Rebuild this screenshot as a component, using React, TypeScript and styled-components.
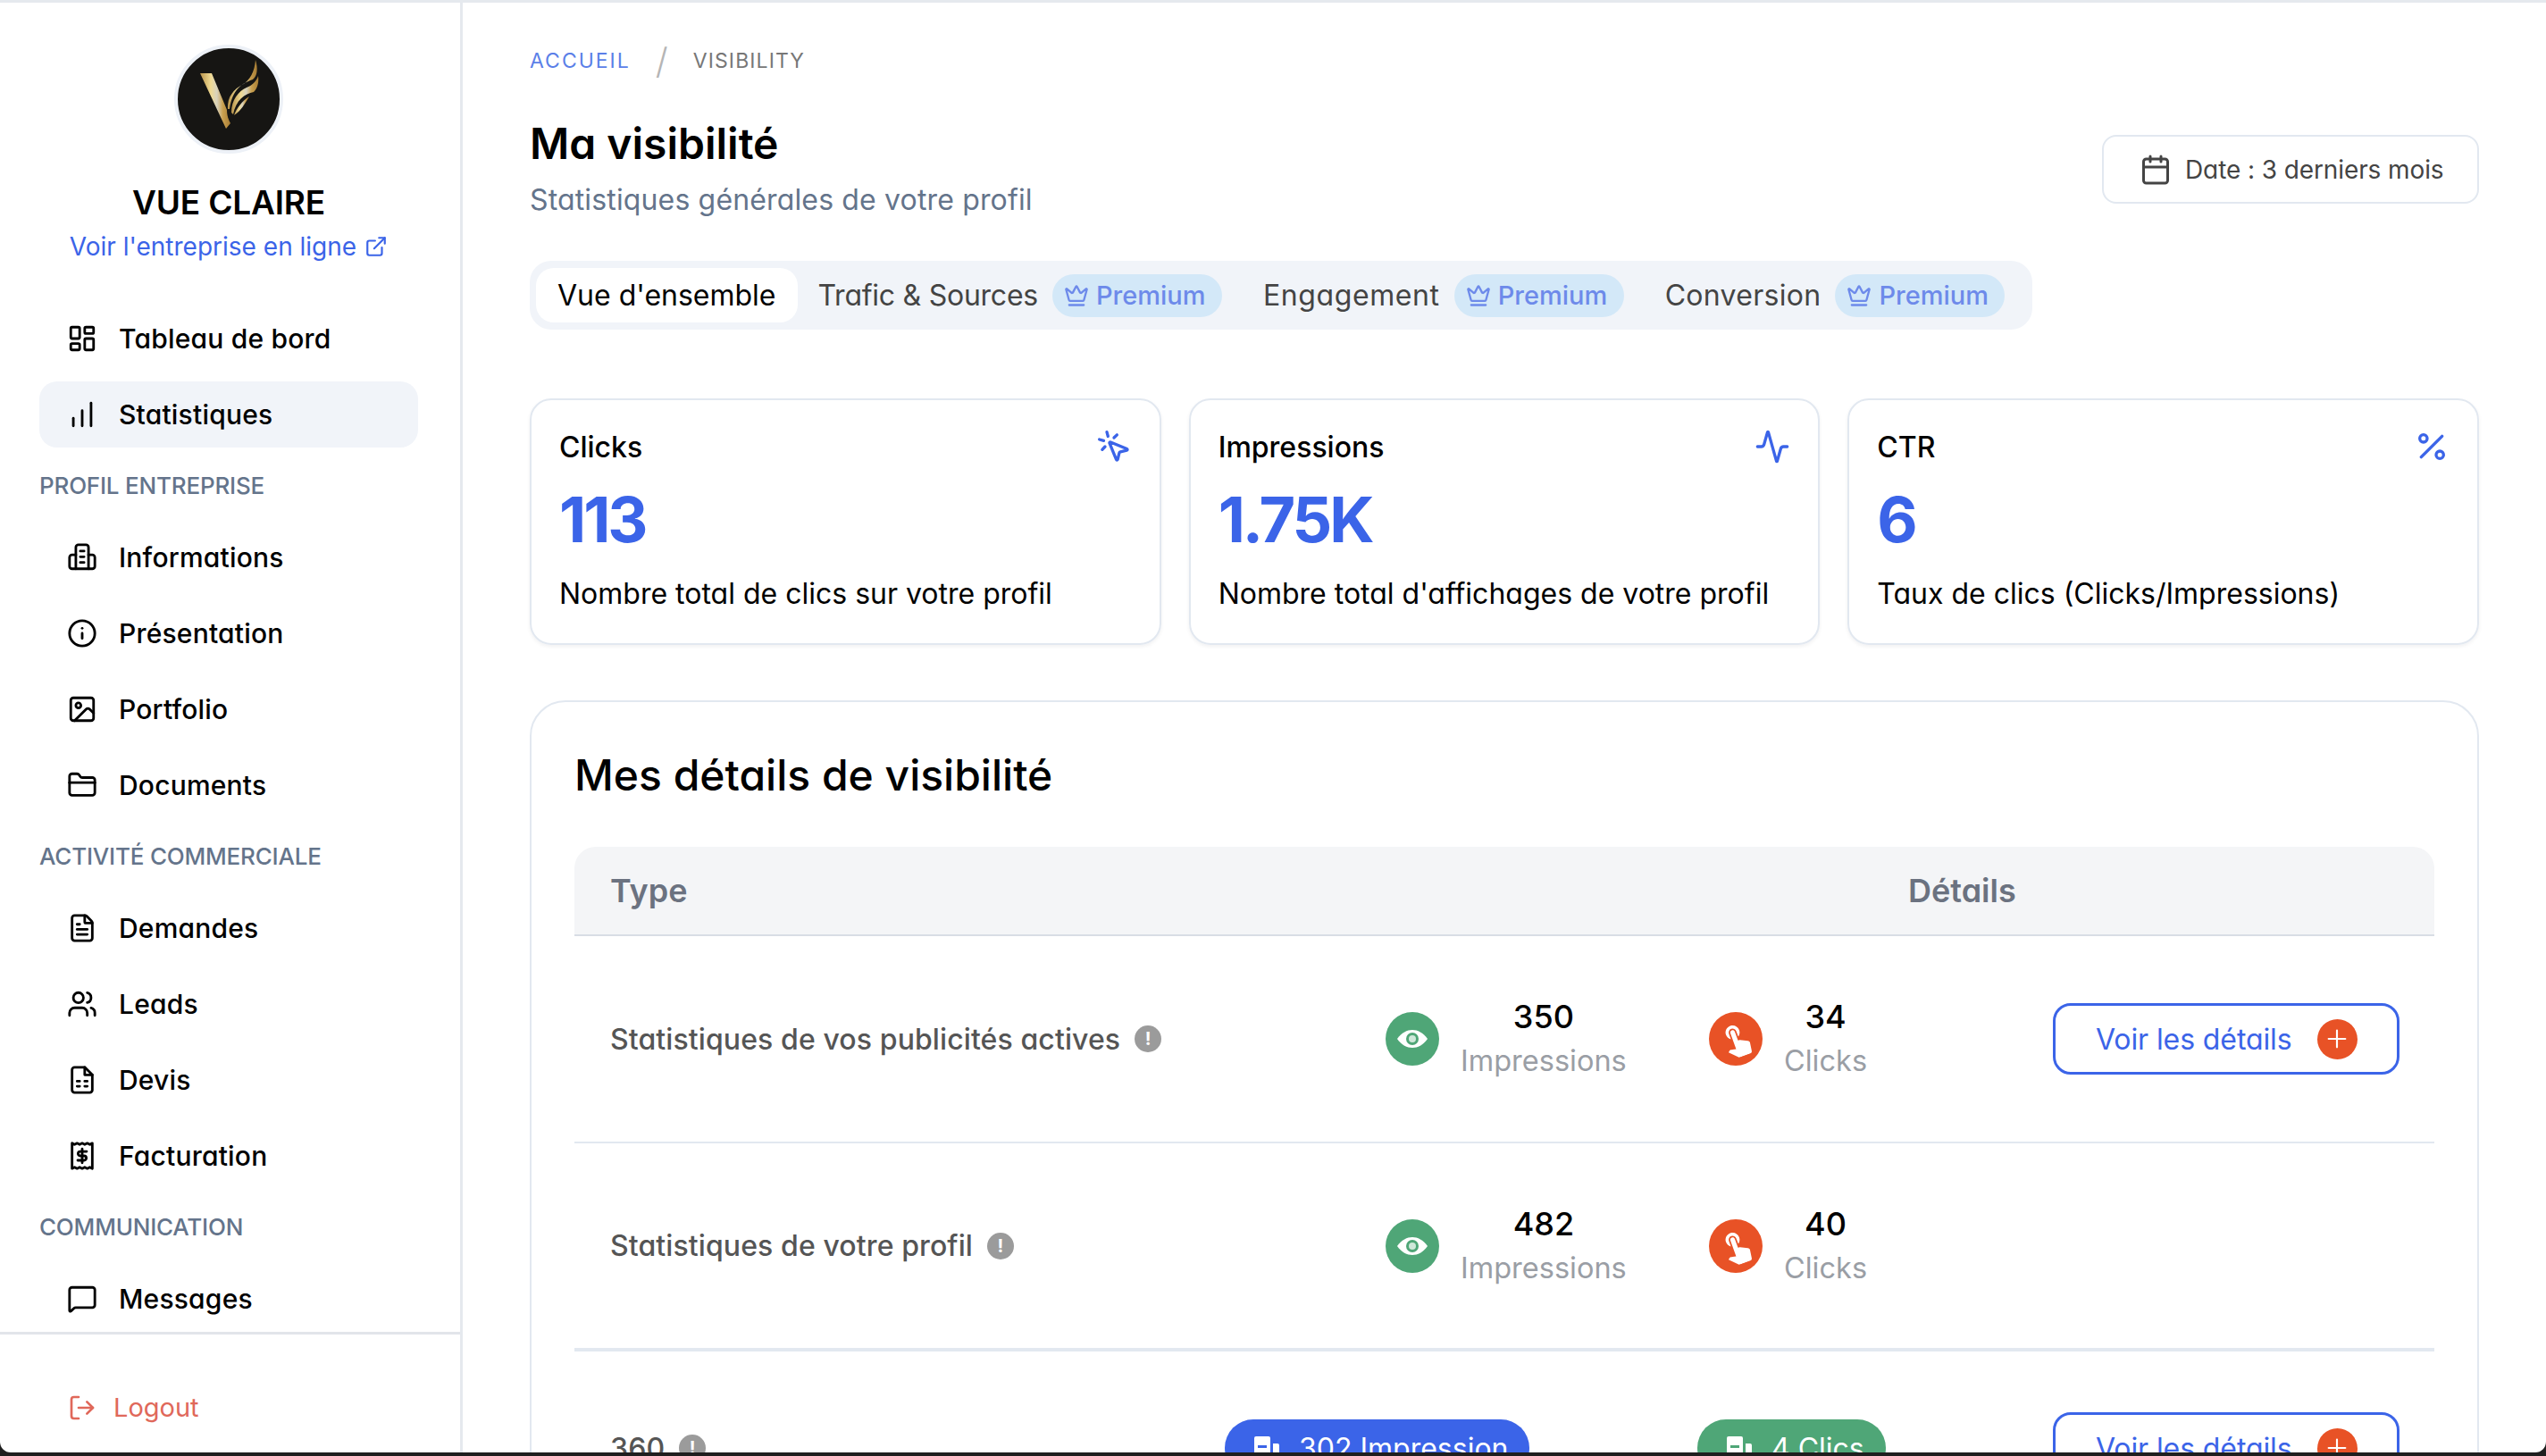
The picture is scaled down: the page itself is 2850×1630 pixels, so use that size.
import React from "react";
import styled, { createGlobalStyle } from "styled-components";
import {
  LayoutDashboard,
  ChartNoAxesColumnIncreasing,
  Info,
  Image,
  FolderClosed,
  FileText,
  Users,
  MessageSquare,
  LogOut,
  ExternalLink,
  Calendar,
  Crown,
  MousePointerClick,
  Activity,
  Percent,
  Plus,
} from "lucide-react";
import { MdTouchApp } from "react-icons/md";

const GlobalStyle = createGlobalStyle`
  html, body {
    margin: 0;
    padding: 0;
    background: #1f1f1f;
    overflow: hidden;
  }
  body {
    font-family: Inter, "Noto Sans", sans-serif;
    font-feature-settings: "cv11";
    color: #000;
  }
`;

const Shell = styled.div`
  display: flex;
  width: 2850px;
  height: 1626px;
  overflow: hidden;
  background: #fff;
  border-top: 3px solid #e5e9ee;
  border-radius: 0 0 12px 12px;
  box-sizing: border-box;
`;

const Sidebar = styled.aside`
  flex: 0 0 518px;
  box-sizing: border-box;
  border-right: 3px solid #e5e9ee;
  display: flex;
  flex-direction: column;
`;

const Brand = styled.div`
  display: flex;
  flex-direction: column;
  align-items: center;
  padding: 47px 3px 0 0;
  height: 342px;
  box-sizing: border-box;
`;

const Avatar = styled.svg`
  width: 122px;
  height: 122px;
  display: block;
`;

const BrandName = styled.div`
  margin-top: 31px;
  font-size: 37px;
  line-height: 48px;
  font-weight: 600;
  letter-spacing: -0.2px;
`;

const BrandLink = styled.a`
  margin-top: 5px;
  display: flex;
  align-items: center;
  gap: 9px;
  font-size: 28px;
  line-height: 40px;
  color: #3b64e8;
`;

const Nav = styled.nav`
  display: flex;
  flex-direction: column;
  gap: 11px;
  padding: 0 47px 0 44px;
  flex: 1;
`;

const NavRow = styled.div<{ $active?: boolean }>`
  display: flex;
  align-items: center;
  gap: 24px;
  height: 74px;
  padding-left: 31px;
  border-radius: 20px;
  font-size: 30px;
  font-weight: 500;
  letter-spacing: 0.2px;
  background: ${(p) => (p.$active ? "#f1f4f9" : "transparent")};

  svg {
    flex: none;
  }
`;

const NavLabel = styled.div`
  height: 64px;
  display: flex;
  align-items: center;
  font-size: 26px;
  font-weight: 500;
  letter-spacing: -0.2px;
  color: #64748b;
`;

const SideFooter = styled.div`
  border-top: 3px solid #e2e5ea;
  height: 136px;
  box-sizing: border-box;
  padding: 60px 0 0 76px;
`;

const Logout = styled.div`
  display: flex;
  align-items: center;
  gap: 19px;
  height: 44px;
  font-size: 29px;
  color: #e0685a;
`;

const Main = styled.main`
  flex: 1;
  min-width: 0;
  padding: 0 75px;
`;

const Breadcrumb = styled.div`
  display: flex;
  align-items: center;
  height: 40px;
  margin-top: 45px;
  font-size: 23px;
`;

const Crumb = styled.span<{ $link?: boolean }>`
  color: ${(p) => (p.$link ? "#5b7fe8" : "#777")};
  letter-spacing: ${(p) => (p.$link ? "2px" : "1.1px")};
`;

const Slash = styled.span`
  margin: 0 28px;
  font-size: 40px;
  font-weight: 300;
  color: #b5b5b5;
`;

const HeaderRow = styled.div`
  display: flex;
  justify-content: space-between;
  align-items: flex-start;
  margin-top: 20px;
`;

const Title = styled.h1`
  margin: 23px 0 0;
  font-size: 48px;
  line-height: 60px;
  font-weight: 600;
`;

const Subtitle = styled.p`
  margin: 11px 0 0;
  font-size: 32px;
  line-height: 44px;
  letter-spacing: 0.15px;
  color: #64748b;
`;

const DateButton = styled.div`
  display: flex;
  align-items: center;
  gap: 15px;
  margin-top: 43px;
  width: 422px;
  height: 77px;
  padding-left: 40px;
  box-sizing: border-box;
  border: 2px solid #e2e8f0;
  border-radius: 16px;
  font-size: 28px;
  letter-spacing: -0.1px;
  color: #444;
`;

const Tabs = styled.div`
  display: inline-flex;
  align-items: center;
  height: 77px;
  margin-top: 46px;
  padding: 0 31px 0 7px;
  background: #f1f4f9;
  border-radius: 24px;
`;

const ActiveTab = styled.div`
  display: flex;
  align-items: center;
  height: 61px;
  padding: 0 24px;
  margin-right: 23px;
  border-radius: 20px;
  font-size: 32px;
  background: #fff;
`;

const Tab = styled.div<{ $spacing: number }>`
  display: flex;
  align-items: center;
  gap: 16px;
  margin-right: 46px;
  font-size: 32px;
  letter-spacing: ${(p) => p.$spacing}px;
  color: #444;

  &:last-child {
    margin-right: 0;
  }
`;

const PremiumPill = styled.span`
  display: inline-flex;
  align-items: center;
  gap: 8px;
  width: 190px;
  height: 48px;
  padding-left: 13px;
  box-sizing: border-box;
  border-radius: 24px;
  background: #d3e8f8;
  font-size: 29px;
  font-weight: 500;
  letter-spacing: 0;
  color: #6d8aea;
`;

const Cards = styled.div`
  display: grid;
  grid-template-columns: repeat(3, 1fr);
  gap: 31px;
  margin-top: 77px;
`;

const Card = styled.div`
  height: 276px;
  box-sizing: border-box;
  padding: 32px 31px;
  border: 2px solid #e2e8f0;
  border-radius: 24px;
  box-shadow: 0 2px 4px rgba(15, 23, 42, 0.06);
`;

const CardTop = styled.div`
  display: flex;
  justify-content: space-between;
  align-items: center;
  height: 40px;
  font-size: 32px;
  font-weight: 500;
  color: #3b64e8;
`;

const CardTitle = styled.span`
  color: #000;
`;

const CardValue = styled.div`
  margin-top: 18px;
  font-size: 70px;
  line-height: 88px;
  font-weight: 700;
  letter-spacing: -3px;
  color: #3b64e8;
`;

const CardText = styled.div`
  margin-top: 17px;
  font-size: 32px;
  line-height: 44px;
`;

const Panel = styled.section`
  margin-top: 62px;
  height: 900px;
  box-sizing: border-box;
  padding: 0 48px;
  border: 2px solid #e2e8f0;
  border-radius: 40px;
`;

const PanelTitle = styled.h2`
  margin: 0;
  padding-top: 51px;
  height: 162px;
  box-sizing: border-box;
  font-size: 48px;
  line-height: 62px;
  font-weight: 500;
`;

const TableHead = styled.div`
  display: grid;
  grid-template-columns: 1453px 1fr;
  align-items: center;
  height: 98px;
  padding: 0 40px;
  background: #f4f5f7;
  border-bottom: 2px solid #d8dde5;
  border-radius: 24px 24px 0 0;
  font-size: 36px;
  font-weight: 600;
  color: #6b7280;
`;

const Row = styled.div<{ $pills?: boolean; $height: number; $thick?: boolean }>`
  display: grid;
  grid-template-columns: ${(p) =>
    p.$pills ? "688px 529px 398px 388px" : "868px 362px 385px 388px"};
  align-items: center;
  height: ${(p) => p.$height}px;
  box-sizing: border-box;
  padding: 0 40px;
  border-bottom: ${(p) => (p.$thick ? "4px" : "2px")} solid #e2e8f0;

  &:last-child {
    border-bottom: 0;
  }
`;

const RowTitle = styled.div`
  display: flex;
  align-items: center;
  gap: 16px;
  font-size: 32px;
  font-weight: 500;
  letter-spacing: 0.1px;
  color: #555;
`;

const Hint = styled.span`
  display: inline-flex;
  align-items: center;
  justify-content: center;
  width: 30px;
  height: 30px;
  border-radius: 50%;
  background: #9b9b9b;
  color: #fff;
  font-size: 20px;
  font-weight: 700;
`;

const Stat = styled.div`
  display: flex;
  align-items: center;
  gap: 24px;
`;

const StatIcon = styled.span<{ $bg: string }>`
  display: inline-flex;
  align-items: center;
  justify-content: center;
  width: 60px;
  height: 60px;
  border-radius: 50%;
  background: ${(p) => p.$bg};
  color: #fff;
`;

const TouchIcon = styled(MdTouchApp)`
  transform: rotate(-20deg);
`;

const StatText = styled.div`
  display: flex;
  flex-direction: column;
  align-items: center;
  gap: 6px;
`;

const StatValue = styled.span`
  font-size: 36px;
  line-height: 44px;
  font-weight: 500;
`;

const StatName = styled.span`
  font-size: 32.5px;
  line-height: 44px;
  color: #9a9ea5;
`;

const DetailsButton = styled.div`
  display: flex;
  align-items: center;
  gap: 28px;
  height: 80px;
  padding-left: 45px;
  box-sizing: border-box;
  border: 3px solid #3b64e8;
  border-radius: 20px;
  font-size: 32px;
  letter-spacing: -0.1px;
  color: #3b64e8;
`;

const PlusDot = styled.span`
  display: inline-flex;
  align-items: center;
  justify-content: center;
  width: 45px;
  height: 45px;
  border-radius: 50%;
  background: #e85226;
  color: #fff;
`;

const CountPill = styled.div<{ $bg: string; $width: number }>`
  display: flex;
  align-items: center;
  gap: 21px;
  width: ${(p) => p.$width}px;
  height: 64px;
  padding-left: 32px;
  box-sizing: border-box;
  border-radius: 32px;
  background: ${(p) => p.$bg};
  color: #fff;
  font-size: 32px;
`;

function NewsIcon() {
  return (
    <svg width="34" height="34" viewBox="0 0 24 24" fill="none" stroke="currentColor" strokeWidth="2" strokeLinecap="round" strokeLinejoin="round">
      <path d="M7 21V4a2 2 0 0 1 2-2h6a2 2 0 0 1 2 2v17" />
      <path d="M7 10H4a2 2 0 0 0-2 2v7a2 2 0 0 0 2 2h16a2 2 0 0 0 2-2v-7a2 2 0 0 0-2-2h-3" />
      <path d="M10.5 7h3M10.5 11.5h3M10.5 16h3" />
    </svg>
  );
}

function QuoteIcon() {
  return (
    <svg width="34" height="34" viewBox="0 0 24 24" fill="none" stroke="currentColor" strokeWidth="2" strokeLinecap="round" strokeLinejoin="round">
      <path d="M6 22a2 2 0 0 1-2-2V4a2 2 0 0 1 2-2h8l6 6v12a2 2 0 0 1-2 2z" />
      <path d="M14 2v6h6" />
      <path d="M8 13h2M14 13h2M8 17h2M14 17h2" />
    </svg>
  );
}

function ReceiptIcon() {
  return (
    <svg width="34" height="34" viewBox="0 0 24 24" fill="none" stroke="currentColor" strokeWidth="2" strokeLinecap="round" strokeLinejoin="round">
      <path d="M4 2v20l2-1 2 1 2-1 2 1 2-1 2 1 2-1 2 1V2l-2 1-2-1-2 1-2-1-2 1-2-1-2 1z" />
      <path d="M15.5 8.5h-5a1.75 1.75 0 0 0 0 3.5h3a1.75 1.75 0 0 1 0 3.5h-5M12 6.5v11" />
    </svg>
  );
}

function SolidEye() {
  return (
    <svg width="36" height="36" viewBox="0 0 36 36">
      <path fill="#fff" d="M1 18C6 11 12 8 18 8s12 3 17 10c-5 7-11 10-17 10S6 25 1 18z" />
      <circle cx="18" cy="18" r="7" fill="#4fa677" />
      <circle cx="18" cy="18" r="4" fill="#cfe8da" />
    </svg>
  );
}

function SolidDoc({ accent }: { accent: string }) {
  return (
    <svg width="30" height="30" viewBox="0 0 30 30">
      <path fill="#fff" d="M3 2h14a2 2 0 0 1 2 2v24H1V4a2 2 0 0 1 2-2z" />
      <path fill="#fff" d="M22 10h5a2 2 0 0 1 2 2v16h-7z" />
      <rect x="5" y="12" width="10" height="3" fill={accent} />
    </svg>
  );
}

function Logo() {
  return (
    <Avatar viewBox="0 0 122 122">
      <defs>
        <linearGradient id="gold" x1="0" y1="0" x2="1" y2="0">
          <stop offset="0" stopColor="#b8934a" />
          <stop offset="0.35" stopColor="#efd992" />
          <stop offset="0.55" stopColor="#d8d2bd" />
          <stop offset="0.75" stopColor="#c9a050" />
          <stop offset="1" stopColor="#a77c33" />
        </linearGradient>
      </defs>
      <circle cx="61" cy="61" r="59" fill="#161513" stroke="#edf1f7" strokeWidth="4" />
      <path fill="url(#gold)" d="M29 32H42L59 73C59 80 61 84 63 88L58 94Z" />
      <path fill="url(#gold)" d="M60 72C59 58 67 50 76 45C85 40 90 30 91 17C94 27 93 35 88 39C76 43 65 50 62 72Z" />
      <path fill="url(#gold)" d="M64 76C64 62 72 52 81 48C87 46 92 41 94 35C95 43 93 49 89 53C79 55 69 62 66 78Z" />
      <path fill="url(#gold)" d="M67 79C70 71 76 63 84 58C79 66 75 74 67 79Z" />
    </Avatar>
  );
}

const iconProps = { size: 34, strokeWidth: 2 };

function PremiumTag() {
  return (
    <PremiumPill>
      <Crown size={28} strokeWidth={2} />
      Premium
    </PremiumPill>
  );
}

function Details() {
  return (
    <DetailsButton>
      Voir les détails
      <PlusDot>
        <Plus size={32} strokeWidth={1.6} />
      </PlusDot>
    </DetailsButton>
  );
}

function Stats({ views, clicks }: { views: string; clicks: string }) {
  return (
    <>
      <Stat>
        <StatIcon $bg="#4fa677">
          <SolidEye />
        </StatIcon>
        <StatText>
          <StatValue>{views}</StatValue>
          <StatName>Impressions</StatName>
        </StatText>
      </Stat>
      <Stat>
        <StatIcon $bg="#e85226">
          <TouchIcon size={42} />
        </StatIcon>
        <StatText>
          <StatValue>{clicks}</StatValue>
          <StatName>Clicks</StatName>
        </StatText>
      </Stat>
    </>
  );
}

export default function App() {
  return (
    <>
      <GlobalStyle />
      <Shell>
        <Sidebar>
          <Brand>
            <Logo />
            <BrandName>VUE CLAIRE</BrandName>
            <BrandLink>
              Voir l'entreprise en ligne
              <ExternalLink size={26} strokeWidth={2} />
            </BrandLink>
          </Brand>
          <Nav>
            <NavRow><LayoutDashboard {...iconProps} />Tableau de bord</NavRow>
            <NavRow $active><ChartNoAxesColumnIncreasing {...iconProps} />Statistiques</NavRow>
            <NavLabel>PROFIL ENTREPRISE</NavLabel>
            <NavRow><NewsIcon />Informations</NavRow>
            <NavRow><Info {...iconProps} />Présentation</NavRow>
            <NavRow><Image {...iconProps} />Portfolio</NavRow>
            <NavRow><FolderClosed {...iconProps} />Documents</NavRow>
            <NavLabel>ACTIVITÉ COMMERCIALE</NavLabel>
            <NavRow><FileText {...iconProps} />Demandes</NavRow>
            <NavRow><Users {...iconProps} />Leads</NavRow>
            <NavRow><QuoteIcon />Devis</NavRow>
            <NavRow><ReceiptIcon />Facturation</NavRow>
            <NavLabel>COMMUNICATION</NavLabel>
            <NavRow><MessageSquare {...iconProps} />Messages</NavRow>
          </Nav>
          <SideFooter>
            <Logout>
              <LogOut size={32} strokeWidth={2} />
              Logout
            </Logout>
          </SideFooter>
        </Sidebar>
        <Main>
          <Breadcrumb>
            <Crumb $link>ACCUEIL</Crumb>
            <Slash>/</Slash>
            <Crumb>VISIBILITY</Crumb>
          </Breadcrumb>
          <HeaderRow>
            <div>
              <Title>Ma visibilité</Title>
              <Subtitle>Statistiques générales de votre profil</Subtitle>
            </div>
            <DateButton>
              <Calendar size={36} strokeWidth={2} />
              Date : 3 derniers mois
            </DateButton>
          </HeaderRow>
          <Tabs>
            <ActiveTab>Vue d'ensemble</ActiveTab>
            <Tab $spacing={-0.25}>Trafic &amp; Sources<PremiumTag /></Tab>
            <Tab $spacing={0.6}>Engagement<PremiumTag /></Tab>
            <Tab $spacing={0.3}>Conversion<PremiumTag /></Tab>
          </Tabs>
          <Cards>
            <Card>
              <CardTop><CardTitle>Clicks</CardTitle><MousePointerClick size={40} strokeWidth={2} /></CardTop>
              <CardValue>113</CardValue>
              <CardText>Nombre total de clics sur votre profil</CardText>
            </Card>
            <Card>
              <CardTop><CardTitle>Impressions</CardTitle><Activity size={40} strokeWidth={2} /></CardTop>
              <CardValue>1.75K</CardValue>
              <CardText>Nombre total d'affichages de votre profil</CardText>
            </Card>
            <Card>
              <CardTop><CardTitle>CTR</CardTitle><Percent size={40} strokeWidth={2} /></CardTop>
              <CardValue>6</CardValue>
              <CardText>Taux de clics (Clicks/Impressions)</CardText>
            </Card>
          </Cards>
          <Panel>
            <PanelTitle>Mes détails de visibilité</PanelTitle>
            <TableHead>
              <span>Type</span>
              <span>Détails</span>
            </TableHead>
            <Row $height={232}>
              <RowTitle>Statistiques de vos publicités actives<Hint>!</Hint></RowTitle>
              <Stats views="350" clicks="34" />
              <Details />
            </Row>
            <Row $height={233} $thick>
              <RowTitle>Statistiques de votre profil<Hint>!</Hint></RowTitle>
              <Stats views="482" clicks="40" />
            </Row>
            <Row $pills $height={216}>
              <RowTitle>360<Hint>!</Hint></RowTitle>
              <CountPill $bg="#3b64e8" $width={341}><SolidDoc accent="#3b64e8" />302 Impression</CountPill>
              <CountPill $bg="#4fa677" $width={211}><SolidDoc accent="#4fa677" />4 Clics</CountPill>
              <Details />
            </Row>
          </Panel>
        </Main>
      </Shell>
    </>
  );
}
